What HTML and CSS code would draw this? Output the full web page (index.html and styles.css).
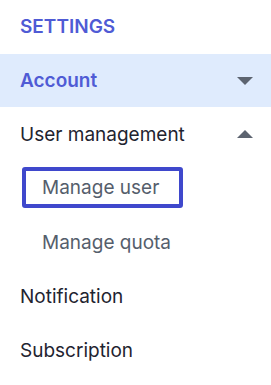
FILE: index.html
```html
<!DOCTYPE html>
<html lang="en">
<head>
    <meta charset="UTF-8">
    <meta name="viewport" content="width=device-width, initial-scale=1.0">
    <title>Settings</title>
    <link rel="stylesheet" href="styles.css">
</head>
<body>
    <nav class="sidebar">
        <div class="sidebar-title">Settings</div>

        <!-- Account group -->
        <div class="menu-item menu-item-active">
            <span>Account</span>
            <span class="caret caret-down"></span>
        </div>

        <!-- User management group -->
        <div class="menu-item">
            <span>User management</span>
            <span class="caret caret-up"></span>
        </div>
        <div class="submenu">
            <div class="submenu-item submenu-item-focus">Manage user</div>
            <div class="submenu-item">Manage quota</div>
        </div>

        <div class="menu-item">Notification</div>
        <div class="menu-item">Subscription</div>
    </nav>
</body>
</html>
```

FILE: styles.css
```css
/* General Styling */
body {
    margin: 0;
    padding: 0;
    font-family: 'Inter', 'Noto Sans', sans-serif;
    background: #fff;
    color: #1f2430;
}

/* Sidebar */
.sidebar {
    width: 271px;
    display: flex;
    flex-direction: column;
}
.sidebar-title {
    height: 54px;
    line-height: 54px;
    padding-left: 20px;
    font-size: 19px;
    font-weight: 600;
    color: #4f5bd5;
    text-transform: uppercase;
}

/* Menu rows */
.menu-item {
    height: 54px;
    display: flex;
    align-items: center;
    justify-content: space-between;
    padding: 0 18px 0 20px;
    font-size: 19px;
}
.menu-item-active {
    height: 53px;
    background: #dfebfd;
    color: #4f5bd5;
    font-weight: 600;
}

/* Carets */
.caret {
    width: 0;
    height: 0;
    border-left: 8px solid transparent;
    border-right: 8px solid transparent;
}
.caret-down {
    border-top: 8px solid #5d6470;
}
.caret-up {
    border-bottom: 8px solid #5d6470;
}

/* Submenu */
.submenu {
    display: flex;
    flex-direction: column;
}
.submenu-item {
    height: 54px;
    display: flex;
    align-items: center;
    padding-left: 42px;
    font-size: 19px;
    color: #555e6c;
}
.submenu-item-focus {
    box-sizing: border-box;
    height: 41px;
    width: 161px;
    margin: 6px 0 7px 22px;
    padding-left: 16px;
    border: 4px solid #3f48cc;
    border-radius: 3px;
}
```
